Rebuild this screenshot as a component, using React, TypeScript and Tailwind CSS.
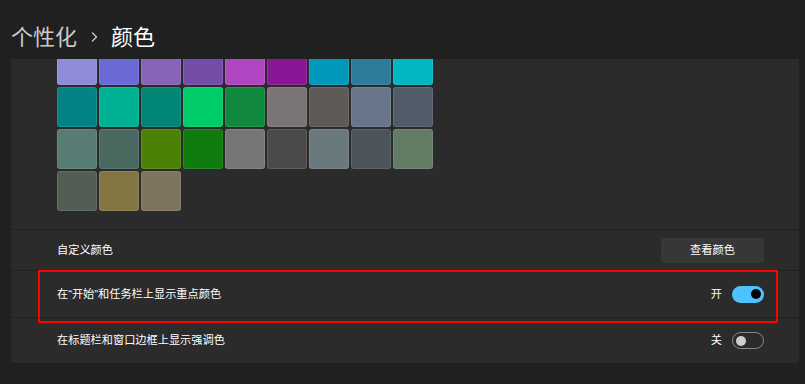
import React from 'react'

const SWATCHES = [
  '#8e8cd8', '#6b69d6', '#8764b8', '#744da9', '#b146c2', '#881798', '#0099bc', '#2d7d9a', '#00b7c3',
  '#038387', '#00b294', '#018574', '#00cc6a', '#10893e', '#7a7574', '#5d5a58', '#68768a', '#515c6b',
  '#567c73', '#486860', '#498205', '#107c10', '#767676', '#4c4a48', '#69797e', '#4a5459', '#647c64',
  '#525e54', '#847545', '#7e735f',
]

const font = { fontFamily: '"Liberation Sans", "Noto Sans CJK SC", sans-serif' }

function Toggle({ on }: { on: boolean }) {
  if (on) {
    return (
      <div className="flex h-[17px] w-[32px] items-center justify-end rounded-full bg-[#4cc2ff] pr-[3px]">
        <div className="h-[10px] w-[10px] rounded-full bg-black" />
      </div>
    )
  }
  return (
    <div className="flex h-[17px] w-[32px] items-center rounded-full border border-[#8b8b8b] pl-[3px]">
      <div className="h-[10px] w-[10px] rounded-full bg-[#cecece]" />
    </div>
  )
}

function SettingRow({ label, right, className }: { label: string; right: React.ReactNode; className: string }) {
  return (
    <div className={`flex items-center justify-between border-t border-[#1f1f1f] pl-[46px] pr-[35px] ${className}`}>
      <span className="text-[11.2px] text-white">{label}</span>
      {right}
    </div>
  )
}

export default function App() {
  return (
    <div className="relative flex h-[384px] w-[805px] flex-col overflow-hidden bg-[#202020]" style={font}>
      {/* Breadcrumb title */}
      <div className="flex h-[59px] shrink-0 items-center pl-[11px] pt-[15px] text-[22px]">
        <span className="text-[#c9c9c9]">个性化</span>
        <svg className="ml-[14px] mr-[13px]" width="7" height="10" viewBox="0 0 7 10" fill="none">
          <path d="M1.5 1 L5.5 5 L1.5 9" stroke="#c9c9c9" strokeWidth="1.4" strokeLinecap="round" strokeLinejoin="round" />
        </svg>
        <span className="text-white">颜色</span>
      </div>

      {/* Scrolled settings card */}
      <div className="ml-[11px] mr-[6px] h-[304px] overflow-hidden rounded-b-[4px] bg-[#2b2b2b]">
        <div className="-mt-[14px] pb-[18px] pl-[46px]">
          <div className="grid w-[376px] grid-cols-[repeat(9,40px)] gap-[2px]">
            {SWATCHES.map((c) => (
              <div
                key={c}
                className="h-[40px] rounded-[3px] border border-white/10"
                style={{ backgroundColor: c }}
              />
            ))}
          </div>
        </div>

        <SettingRow
          label="自定义颜色"
          className="h-[41px]"
          right={
            <button className="flex h-[25px] w-[103px] items-center justify-center rounded-[4px] bg-[#373737] text-[11.2px] text-white">
              查看颜色
            </button>
          }
        />
        <SettingRow
          label="在“开始”和任务栏上显示重点颜色"
          className="h-[47px]"
          right={
            <div className="flex items-center gap-[10px]">
              <span className="text-[11.2px] text-white">开</span>
              <Toggle on />
            </div>
          }
        />
        <SettingRow
          label="在标题栏和窗口边框上显示强调色"
          className="h-[46px]"
          right={
            <div className="flex items-center gap-[10px]">
              <span className="text-[11.2px] text-white">关</span>
              <Toggle on={false} />
            </div>
          }
        />
      </div>

      {/* Red highlight annotation */}
      <div className="pointer-events-none absolute left-[38px] top-[270px] h-[53px] w-[740px] border-2 border-[#ff0000]" />
    </div>
  )
}
